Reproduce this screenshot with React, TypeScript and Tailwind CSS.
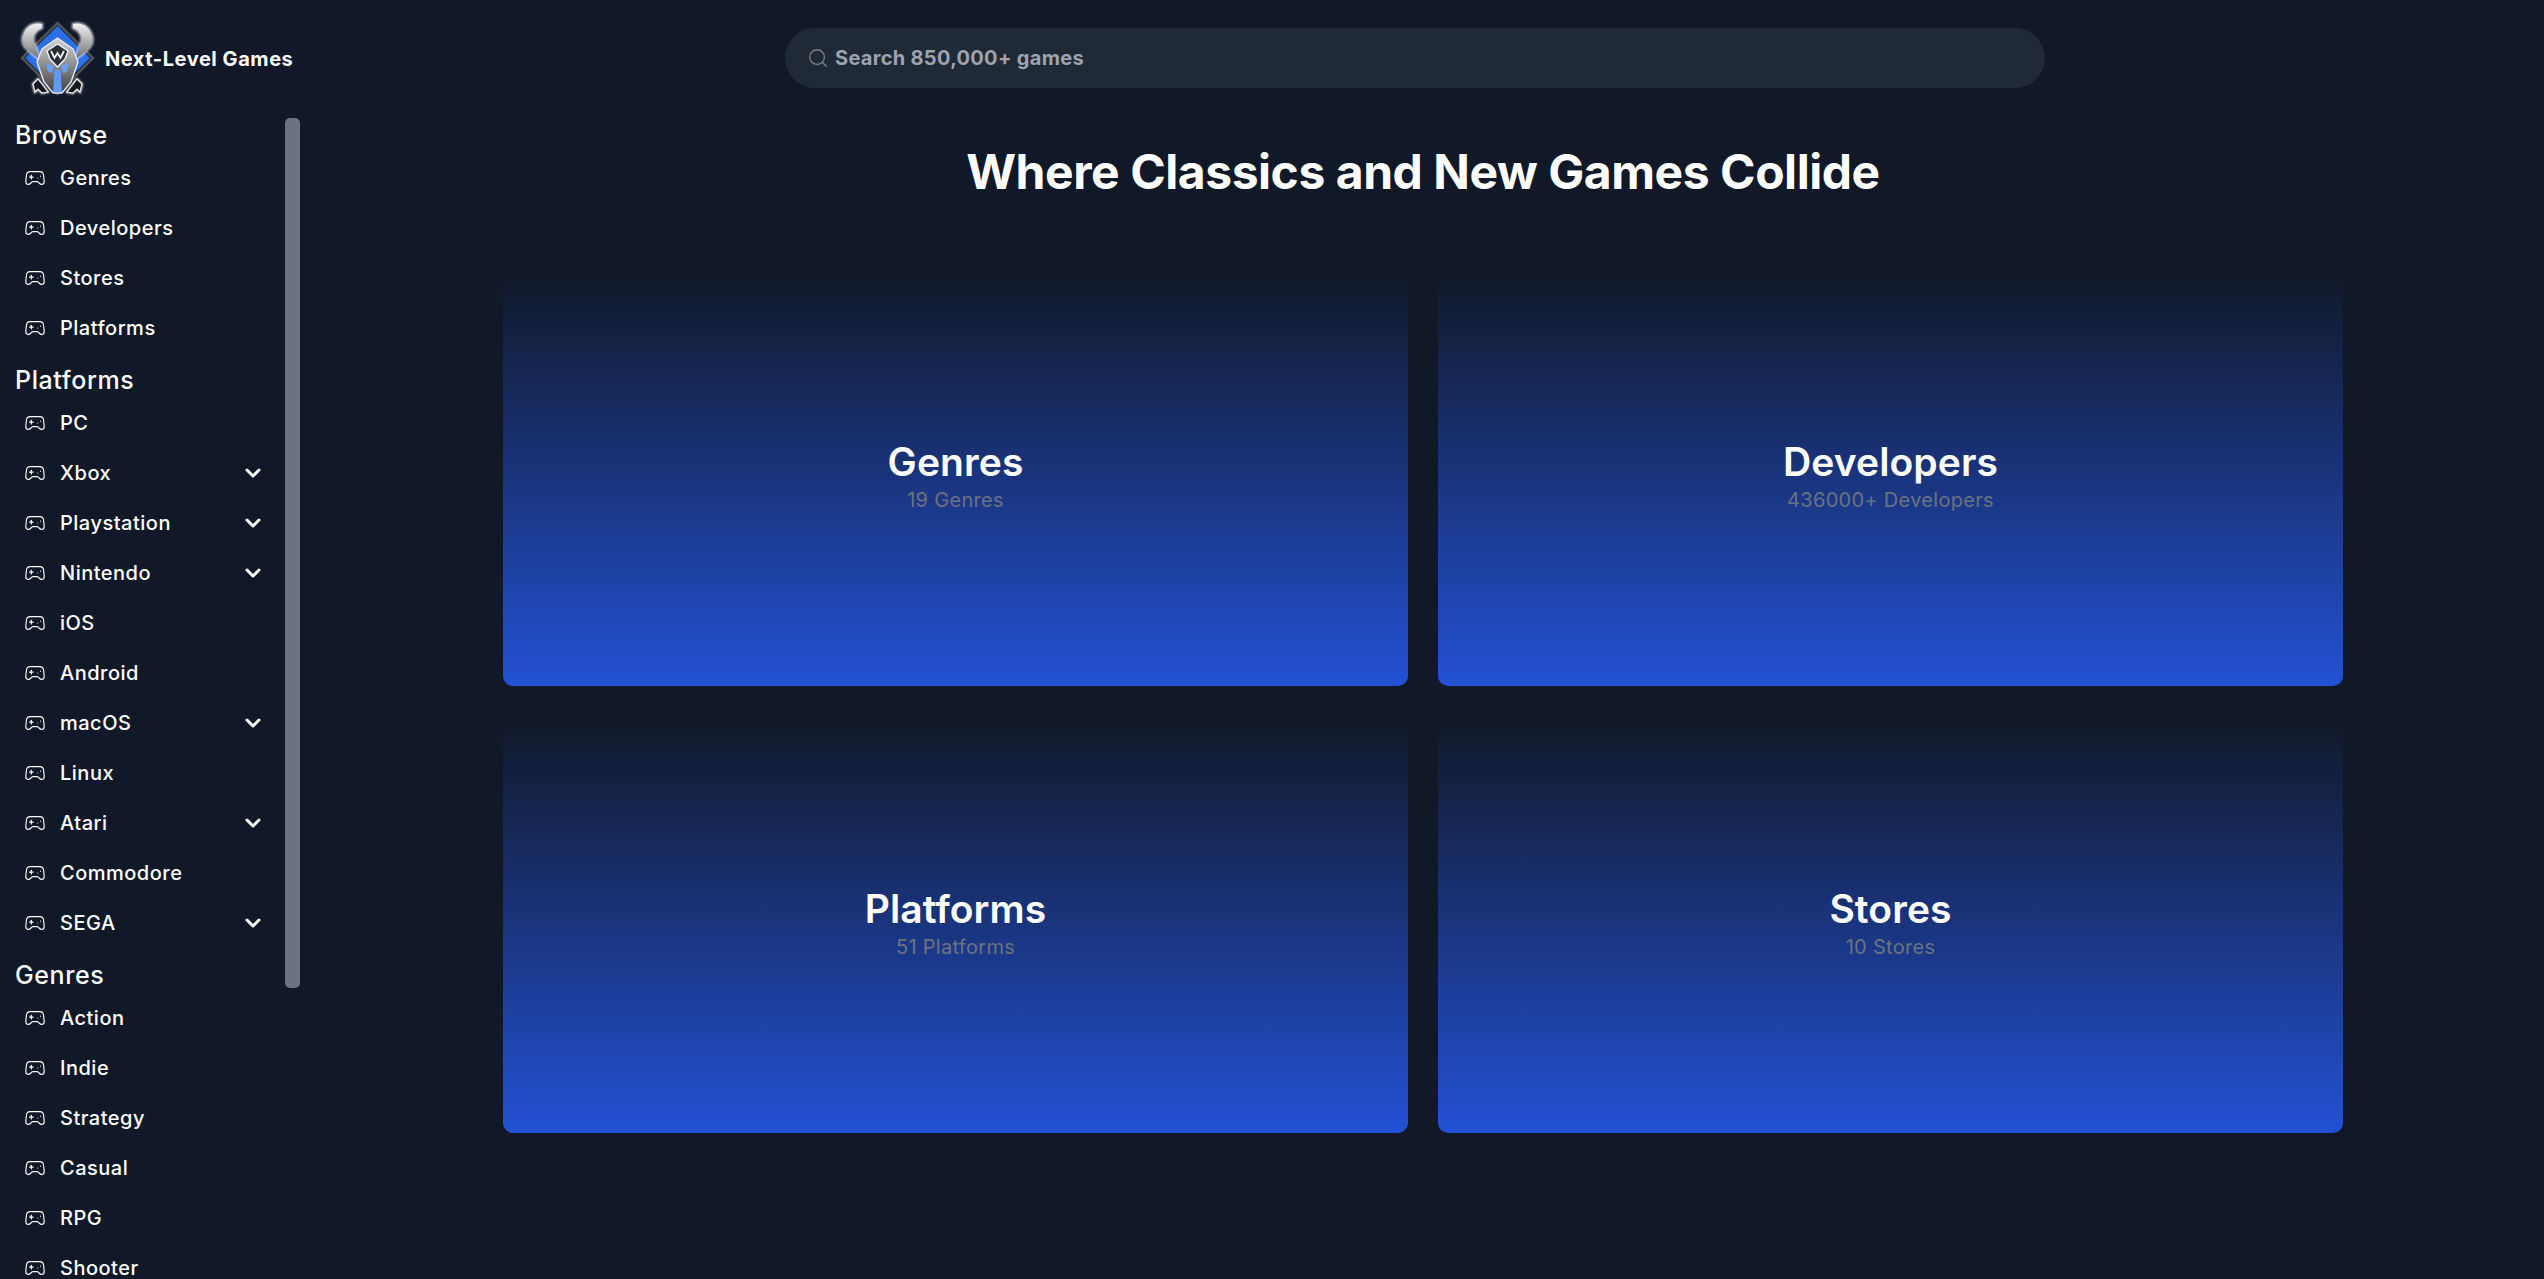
import { Gamepad2, ChevronDown, Search } from "lucide-react";

type Item = { label: string; more?: boolean };
const sections: { title: string; items: Item[] }[] = [
  { title: "Browse", items: [{ label: "Genres" }, { label: "Developers" }, { label: "Stores" }, { label: "Platforms" }] },
  {
    title: "Platforms",
    items: [
      { label: "PC" },
      { label: "Xbox", more: true },
      { label: "Playstation", more: true },
      { label: "Nintendo", more: true },
      { label: "iOS" },
      { label: "Android" },
      { label: "macOS", more: true },
      { label: "Linux" },
      { label: "Atari", more: true },
      { label: "Commodore" },
      { label: "SEGA", more: true },
    ],
  },
  {
    title: "Genres",
    items: [{ label: "Action" }, { label: "Indie" }, { label: "Strategy" }, { label: "Casual" }, { label: "RPG" }, { label: "Shooter" }],
  },
];

const cards = [
  { title: "Genres", sub: "19 Genres" },
  { title: "Developers", sub: "436000+ Developers" },
  { title: "Platforms", sub: "51 Platforms" },
  { title: "Stores", sub: "10 Stores" },
];

function Logo() {
  const hornL = "M32 8 C24 6 17 10 14 17 C11 24 13 30 18 34 L30 44 L25 29 C22 24 23 15 32 12 Z";
  const hornR = "M63 8 C71 6 78 10 81 17 C84 24 82 30 77 34 L65 44 L70 29 C73 24 72 15 63 12 Z";
  return (
    <svg viewBox="0 0 90 85" className="w-[90px] h-[85px] shrink-0">
      <defs>
        <linearGradient id="steel" x1="0" y1="0" x2="0" y2="1">
          <stop offset="0" stopColor="#d6d6d6" />
          <stop offset="1" stopColor="#3f3f3f" />
        </linearGradient>
        <linearGradient id="horn" x1="0" y1="0" x2="0" y2="1">
          <stop offset="0" stopColor="#f2f2f2" />
          <stop offset="1" stopColor="#6d6d6d" />
        </linearGradient>
        <filter id="glow" x="-30%" y="-30%" width="160%" height="160%">
          <feGaussianBlur stdDeviation="1.2" />
        </filter>
      </defs>
      <path d="M47.5 7 L83 42 L47.5 78 L12 42 Z" fill="#1a1d24" stroke="#4f5257" strokeWidth="2.5" />
      <path d="M47.5 10 L80 42 L64 58 L31 58 L15 42 Z" fill="#2b6fe8" />
      <g filter="url(#glow)" fill="none" stroke="#ffffff" strokeWidth="2.4" opacity="0.75">
        <path d={hornL} />
        <path d={hornR} />
        <path d="M23 68 L28 63 L38 76 L32 77 L28 73 L25 76 Z" />
        <path d="M72 68 L67 63 L57 76 L63 77 L67 73 L70 76 Z" />
      </g>
      <path d={hornL} fill="url(#horn)" />
      <path d={hornR} fill="url(#horn)" />
      <path d="M47.5 22 L63 33 L68 46 L61 66 L52 77 L43 77 L34 66 L27 46 L32 33 Z" fill="url(#steel)" stroke="#e2ebfb" strokeWidth="1.4" />
      <path d="M37 35 L47.5 28 L58 35 L55 43 L47.5 51 L40 43 Z" fill="#2a2d33" stroke="#e8f0fd" strokeWidth="1.4" />
      <path d="M41 35 L44.5 42 L47.5 37 L50.5 42 L54 35" fill="none" stroke="#ffffff" strokeWidth="1.7" />
      <path d="M36 47 L44 50 L42 57 L38 56 Z" fill="#6aa0f2" />
      <path d="M59 47 L51 50 L53 57 L57 56 Z" fill="#6aa0f2" />
      <path d="M44.5 54 L50.5 54 L52 76 L43 76 Z" fill="#5f9bf3" />
      <path d="M23 68 L28 63 L38 76 L32 77 L28 73 L25 76 Z" fill="#14171d" stroke="#ececec" strokeWidth="1.2" />
      <path d="M72 68 L67 63 L57 76 L63 77 L67 73 L70 76 Z" fill="#14171d" stroke="#ececec" strokeWidth="1.2" />
    </svg>
  );
}

function Row({ item }: { item: Item }) {
  return (
    <div className="h-[50px] flex items-center pl-[24px] pr-[20px] text-white text-[20px] font-medium tracking-[0.5px]">
      <Gamepad2 size={22} strokeWidth={1.25} className="shrink-0" />
      <span className="ml-[14px] flex-1 leading-none">{item.label}</span>
      {item.more && <ChevronDown size={24} strokeWidth={3} className="shrink-0" />}
    </div>
  );
}

export default function App() {
  return (
    <div className="h-screen overflow-hidden bg-[#111827] flex font-['Inter','Liberation_Sans',sans-serif]">
      <aside className="w-[302px] shrink-0 flex flex-col relative">
        <div className="h-[117px] shrink-0 flex items-center pl-[10px]">
          <Logo />
          <span className="ml-[5px] text-white text-[20px] font-bold tracking-[0.55px]">Next-Level Games</span>
        </div>
        <nav className="flex-1 overflow-hidden pr-[17px]">
          {sections.map((s) => (
            <section key={s.title} className="mb-[9px]">
              <h2 className="pl-[15px] text-white text-[25px] font-medium leading-[36px] tracking-[0.6px]">{s.title}</h2>
              {s.items.map((i) => (
                <Row key={i.label} item={i} />
              ))}
            </section>
          ))}
        </nav>
        <div className="absolute left-[285px] top-[118px] w-[15px] h-[870px] rounded-[5px] bg-[#6b7280]" />
      </aside>
      <main className="flex-1 min-w-0 flex flex-col items-center">
        <div className="w-[1260px] h-[60px] mt-[28px] -ml-[16px] rounded-full bg-[#202a36] flex items-center pl-[22px] gap-[6px]">
          <Search size={22} strokeWidth={1.5} className="text-[#7b7f86]" />
          <span className="text-[#9ca3af] text-[20px] font-bold tracking-[0.3px]">Search 850,000+ games</span>
        </div>
        <h1 className="mt-[54px] text-white text-[48px] font-bold leading-[60px] tracking-[-0.45px]">Where Classics and New Games Collide</h1>
        <div className="mt-[67px] w-[1840px] grid grid-cols-2 gap-[30px]">
          {cards.map((c) => (
            <div key={c.title} className="h-[417px] rounded-[10px] bg-[linear-gradient(to_bottom,#111827,#2351d4)] flex flex-col items-center justify-center pb-[3px]">
              <div className="text-white text-[39px] font-semibold leading-[48px] tracking-[0.1px]">{c.title}</div>
              <div className="text-[#6b7280] text-[20px] leading-[28px] tracking-[0.3px]">{c.sub}</div>
            </div>
          ))}
        </div>
      </main>
    </div>
  );
}
